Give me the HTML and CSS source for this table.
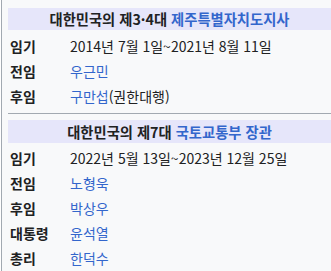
FILE: index.html
```html
<!DOCTYPE html>
<html lang="ko">
<head>
<meta charset="utf-8">
<link rel="stylesheet" href="styles.css">
</head>
<body>
<div class="infobox">
  <div class="prev"><span>대한민국의 제</span><a>국회의원</a> <a>(서귀포시)</a></div>
  <div class="section">
    <div class="head">대한민국의 제3·4대 <a>제주특별자치도지사</a></div>
    <div class="row"><span class="lbl">임기</span><span class="val">2014년 7월 1일~2021년 8월 11일</span></div>
    <div class="row"><span class="lbl">전임</span><span class="val"><a>우근민</a></span></div>
    <div class="row"><span class="lbl">후임</span><span class="val"><a>구만섭</a>(권한대행)</span></div>
  </div>
  <div class="section sep">
    <div class="head">대한민국의 제7대 <a>국토교통부 장관</a></div>
    <div class="row"><span class="lbl">임기</span><span class="val">2022년 5월 13일~2023년 12월 25일</span></div>
    <div class="row"><span class="lbl">전임</span><span class="val"><a>노형욱</a></span></div>
    <div class="row"><span class="lbl">후임</span><span class="val"><a>박상우</a></span></div>
    <div class="row"><span class="lbl">대통령</span><span class="val"><a>윤석열</a></span></div>
    <div class="row"><span class="lbl">총리</span><span class="val"><a>한덕수</a></span></div>
  </div>
</div>
</body>
</html>
```
FILE: styles.css
```css
html, body {
  margin: 0;
  padding: 0;
  background: #ffffff;
  overflow: hidden;
}
body {
  font-family: "Noto Sans CJK KR", "Noto Sans", sans-serif;
  font-size: 14px;
  color: #202122;
}
a {
  color: #3366cc;
  text-decoration: none;
}
.infobox {
  margin-left: 1px;
  border-left: 1px solid #a2a9b1;
  background: #f8f9fa;
  padding-left: 6px;
  min-height: 100vh;
  overflow: hidden;
}
.prev {
  height: 20px;
  line-height: 20px;
  margin-top: -19px;
  margin-bottom: 7px;
  text-align: center;
  font-weight: bold;
}
.section {
  display: flex;
  flex-direction: column;
}
.head {
  background: #e6e6fa;
  text-align: center;
  font-weight: bold;
  height: 22px;
  line-height: 22px;
  margin-bottom: 4px;
  font-size: 14.3px;
}
.sep {
  border-top: 1px solid #a2a9b1;
  margin-top: 4px;
  padding-top: 6px;
}
.sep .head {
  height: 23px;
  line-height: 23px;
  margin-bottom: 3px;
}
.row {
  display: flex;
  height: 25px;
  line-height: 25px;
  padding-left: 2px;
}
.lbl {
  width: 60px;
  font-weight: bold;
}
.val {
  flex: 1;
}
```
